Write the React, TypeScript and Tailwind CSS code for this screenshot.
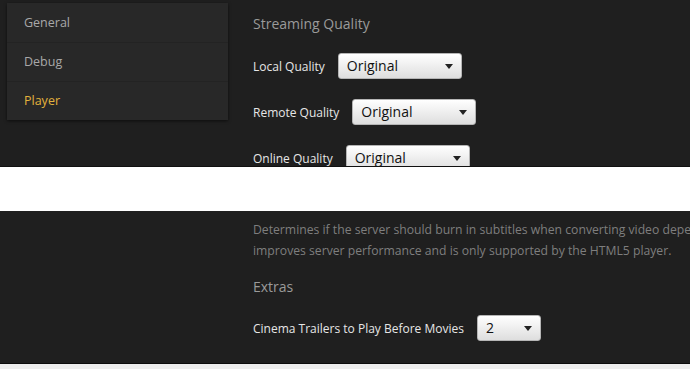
import React from 'react';

const navItems = [
  { label: 'General', active: false },
  { label: 'Debug', active: false },
  { label: 'Player', active: true },
];

interface FakeSelectProps {
  value: string;
  width: string;
}

const FakeSelect: React.FC<FakeSelectProps> = ({ value, width }) => (
  <div
    className={`${width} h-[26px] shrink-0 flex items-center justify-between pl-[8px] pr-[8px] rounded-[3px] border border-[#b5b5b5] bg-gradient-to-b from-[#ffffff] to-[#dedede] text-[14px] text-[#111]`}
  >
    <span className="leading-none">{value}</span>
    <svg width="8" height="5" viewBox="0 0 8 5" className="shrink-0">
      <path d="M0 0h8L4 5z" fill="#222" />
    </svg>
  </div>
);

const Row: React.FC<{ label: string; value: string; width: string; className?: string }> = ({
  label,
  value,
  width,
  className = '',
}) => (
  <div className={`flex items-center gap-[13px] h-[26px] ${className}`}>
    <span className="text-[12px] pt-[2px] text-[#e6e6e6] whitespace-nowrap">{label}</span>
    <FakeSelect value={value} width={width} />
  </div>
);

export default function App() {
  return (
    <div
      className="relative w-[690px] h-[369px] overflow-hidden bg-[#eeeeee]"
      style={{ fontFamily: '"Open Sans", "Noto Sans", sans-serif' }}
    >
      <div className="flex h-[364px] bg-[#1f1f1f] border-b border-[#0d0d0d]">
        {/* sidebar */}
        <div className="w-[228px] shrink-0 pl-[7px] pt-[3px]">
          <div className="bg-[#282828] shadow-[0_1px_3px_rgba(0,0,0,0.6)]">
            {navItems.map((item, i) => (
              <div
                key={item.label}
                className={`h-[39px] flex items-center pl-[17px] pt-[1px] text-[12.5px] ${
                  i > 0 ? 'border-t border-[#232323]' : ''
                } ${item.active ? 'text-[#e2b23c]' : 'text-[#a8a8a8]'}`}
              >
                {item.label}
              </div>
            ))}
          </div>
        </div>

        {/* main */}
        <div className="flex-1 min-w-0 pl-[25px] pt-[14px] overflow-hidden">
          <h2 className="text-[14px] leading-[20px] text-[#9a9a9a]">Streaming Quality</h2>
          <Row label="Local Quality" value="Original" width="w-[124px]" className="mt-[19px]" />
          <Row label="Remote Quality" value="Original" width="w-[124px]" className="mt-[20px]" />
          <Row label="Online Quality" value="Original" width="w-[124px]" className="mt-[20px]" />
          <Row label="Burn Subtitles" value="Automatic" width="w-[151px]" className="mt-[14px]" />
          <p className="mt-[8px] text-[12.2px] leading-[21px] text-[#7e7e7e] whitespace-nowrap">
            Determines if the server should burn in subtitles when converting video depending on the player. This option
            <br />
            improves server performance and is only supported by the HTML5 player.
          </p>
          <h2 className="mt-[16px] text-[14px] leading-[20px] text-[#9a9a9a]">Extras</h2>
          <Row
            label="Cinema Trailers to Play Before Movies"
            value="2"
            width="w-[64px]"
            className="mt-[18px]"
          />
        </div>
      </div>

      {/* white strip laid over the page */}
      <div className="absolute left-0 right-0 top-[166px] h-[45px] bg-white border-t border-[#111]" />
    </div>
  );
}
